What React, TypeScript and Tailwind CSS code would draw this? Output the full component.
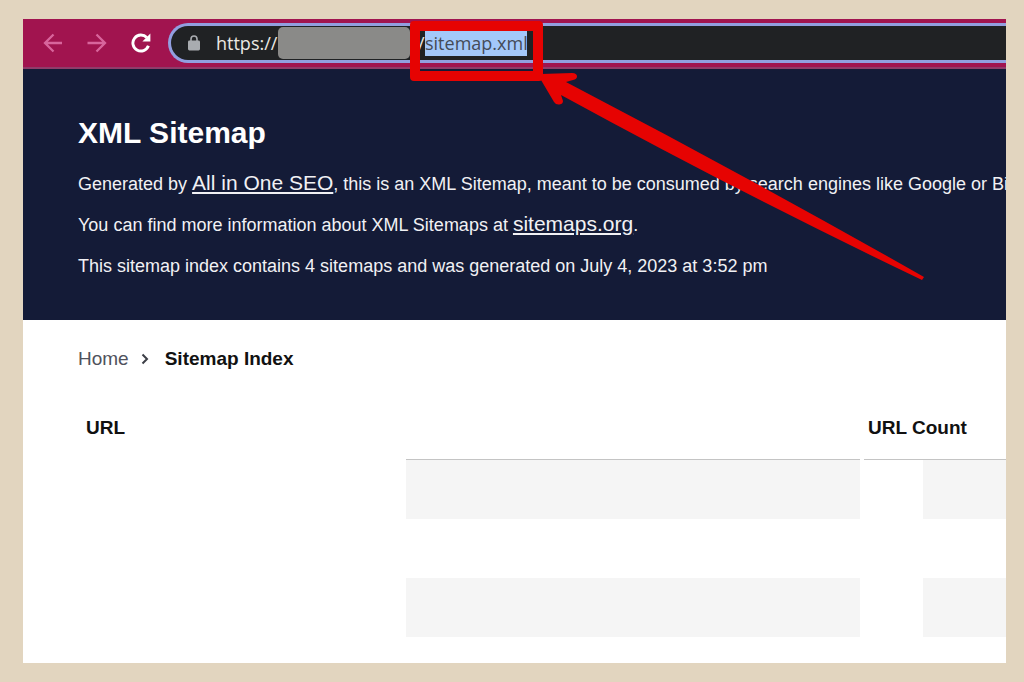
import React from "react";

function BackIcon() {
  return (
    <svg width="20" height="20" viewBox="0 0 20 20" fill="none" stroke="#d8659c" strokeWidth="2.3">
      <path d="M19 10H2.500M10.500 1.500L2 10L10.500 18.500" />
    </svg>
  );
}

function ForwardIcon() {
  return (
    <svg width="20" height="20" viewBox="0 0 20 20" fill="none" stroke="#d8659c" strokeWidth="2.3">
      <path d="M0.500 10H17.500M9.500 1.500L18 10L9.500 18.500" />
    </svg>
  );
}

function ReloadIcon() {
  return (
    <svg width="20" height="20" viewBox="0 0 20 20" fill="none">
      <path d="M15.800 4.600A8 8 0 1 0 17.400 12.800" stroke="#fff" strokeWidth="2.9" />
      <path d="M19.400 0.400V8.400H11.400Z" fill="#fff" />
    </svg>
  );
}

function LockIcon() {
  return (
    <svg width="12" height="16" viewBox="0 0 12 16" className="shrink-0">
      <path d="M3 7V4a3 3 0 0 1 6 0v3" fill="none" stroke="#a9acb0" strokeWidth="1.6" />
      <rect x="0" y="5.5" width="12" height="10" rx="1.4" fill="#a9acb0" />
    </svg>
  );
}

function Callout() {
  return (
    <div className="pointer-events-none absolute -top-[9px] -left-[15px] z-10 h-[60px] w-[133px] rounded-[4px] border-[10px] border-[#e60302]">
      <svg
        className="absolute top-[42px] left-[121px]"
        width="386"
        height="208"
        viewBox="541 73 386 208"
        fill="#e60302"
      >
        <path d="M541 74L572 73Q577 73 577 76.500Q577 79 573 80L566 82Q750 178 924 277L922 280Q740 193 561 95L563 101Q563 104 559.500 104.500Q556 105 554 102L541 80Z" />
      </svg>
    </div>
  );
}

function Toolbar() {
  return (
    <div className="flex h-[50px] items-center border-b-2 border-[#8f3c6a] bg-[#a1144f] pl-5">
      <div className="flex items-center gap-6">
        <button type="button" aria-label="Back"><BackIcon /></button>
        <button type="button" aria-label="Forward"><ForwardIcon /></button>
        <button type="button" aria-label="Reload"><ReloadIcon /></button>
      </div>
      <div className="ml-[17px] flex h-10 flex-1 items-center rounded-l-full border-[3px] border-r-0 border-[#929fe0] bg-[#202224] pl-[17px] font-['Open_Sans','Noto_Sans',sans-serif] text-[18px] text-[#eceae4]">
        <LockIcon />
        <span className="ml-4 w-[62px] shrink-0">https://</span>
        <span className="h-8 w-[132px] shrink-0 rounded-[5px] bg-[#8a8a88]" />
        <span className="ml-2 w-[7px] shrink-0">/</span>
        <div className="relative flex">
          <input
            aria-label="Address"
            defaultValue="sitemap.xml"
            className="h-[26px] w-[102px] bg-[#a3c8fa] text-[#454b57] outline-none"
          />
          <Callout />
        </div>
      </div>
    </div>
  );
}

function Intro() {
  return (
    <header className="bg-[#141b37] pt-[46px] pb-[42px] pl-[55px] whitespace-nowrap text-[#f1f1f4]">
      <h1 className="text-[30px] leading-9 font-bold text-white">XML Sitemap</h1>
      <div className="mt-[21px] flex flex-col gap-[17px] text-[18px] leading-6">
        <p className="h-6">
          Generated by <a href="#aioseo" className="text-[21px] leading-none underline underline-offset-2">All in One SEO</a>, this is an XML
          Sitemap, meant to be consumed by search engines like Google or Bing.
        </p>
        <p className="h-6">
          You can find more information about XML Sitemaps at{" "}
          <a href="#sitemaps" className="text-[21px] leading-none underline underline-offset-2">sitemaps.org</a>.
        </p>
        <p className="h-6">This sitemap index contains 4 sitemaps and was generated on July 4, 2023 at 3:52 pm</p>
      </div>
    </header>
  );
}

function Breadcrumbs() {
  return (
    <nav aria-label="Breadcrumb" className="flex items-center pt-[27px] pl-[55px] text-[19px] leading-6">
      <a href="#home" className="text-[#50525c]">Home</a>
      <svg width="8" height="12" viewBox="0 0 8 12" fill="none" stroke="#3c3e46" strokeWidth="2" className="mr-4 ml-3">
        <path d="M1.500 1.500L6 6L1.500 10.500" />
      </svg>
      <span className="font-bold text-[#111]">Sitemap Index</span>
    </nav>
  );
}

function SitemapTable() {
  const rows = [true, false, true];
  return (
    <div className="mt-[27px] pl-[55px]">
      <table className="w-[calc(100%+4px)] table-fixed border-separate border-spacing-x-1 border-spacing-y-0">
        <thead className="text-left text-[19px] font-bold text-[#111]">
          <tr>
            <th className="p-0">
              <div className="flex h-[62px] items-stretch">
                <span className="flex w-[324px] items-center border-b border-transparent pl-1">URL</span>
                <span className="flex-1 border-b border-[#c4c4c4]" />
              </div>
            </th>
            <th className="w-[142px] p-0">
              <div className="flex h-[62px] items-center border-b border-[#c4c4c4] pl-1">URL Count</div>
            </th>
          </tr>
        </thead>
        <tbody>
          {rows.map((striped, i) => (
            <tr key={i}>
              <td className="p-0">
                <div className="flex h-[59px] pl-[324px]">
                  <div className={striped ? "flex-1 bg-[#f5f5f5]" : "flex-1"} />
                </div>
              </td>
              <td className="p-0">
                <div className="flex h-[59px] pl-[59px]">
                  <div className={striped ? "flex-1 bg-[#f5f5f5]" : "flex-1"} />
                </div>
              </td>
            </tr>
          ))}
        </tbody>
      </table>
    </div>
  );
}

export default function App() {
  return (
    <div className="min-h-screen bg-[#e2d5bf] pt-[19px] pr-[18px] pb-[19px] pl-[23px] font-['Liberation_Sans',Arial,sans-serif]">
      <main className="overflow-hidden bg-white pb-[26px]">
        <Toolbar />
        <Intro />
        <Breadcrumbs />
        <SitemapTable />
      </main>
    </div>
  );
}
